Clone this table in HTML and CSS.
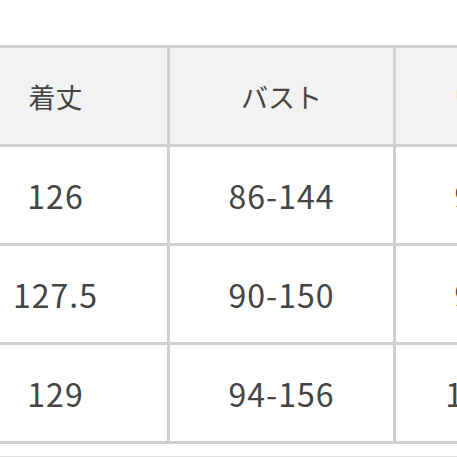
FILE: index.html
```html
<!DOCTYPE html>
<html lang="ja">
<head>
<meta charset="utf-8">
<link rel="stylesheet" href="styles.css">
</head>
<body>
<div class="wrap">
  <table class="size-table">
    <thead>
      <tr><th>着丈</th><th>バスト</th><th>ウエスト</th></tr>
    </thead>
    <tbody>
      <tr><td>126</td><td>86-144</td><td>96-148</td></tr>
      <tr><td>127.5</td><td>90-150</td><td>98-152</td></tr>
      <tr><td>129</td><td>94-156</td><td>102-158</td></tr>
    </tbody>
  </table>
  <div class="after"></div>
</div>
</body>
</html>
```
FILE: styles.css
```css
html, body {
  margin: 0;
  padding: 0;
  background: #ffffff;
  overflow: hidden;
}
.wrap {
  width: 457px;
  height: 457px;
  overflow: hidden;
  padding-top: 45px;
  box-sizing: border-box;
}
.size-table {
  border-collapse: collapse;
  table-layout: fixed;
  margin-left: -59px;
  width: 681px;
  font-family: "Noto Sans CJK JP", "Noto Sans", sans-serif;
  color: #444444;
}
.size-table th,
.size-table td {
  width: 223px;
  height: 99px;
  padding: 0;
  border: 3px solid #d0d0d0;
  text-align: center;
  vertical-align: middle;
  box-sizing: border-box;
  white-space: nowrap;
}
.size-table th {
  background: #f2f2f2;
  font-weight: 400;
  font-size: 27px;
}
.size-table td {
  background: #ffffff;
  font-size: 32px;
  letter-spacing: 1px;
}
.after {
  margin-top: 12px;
  border-top: 1px solid #e2e2e2;
}
```
